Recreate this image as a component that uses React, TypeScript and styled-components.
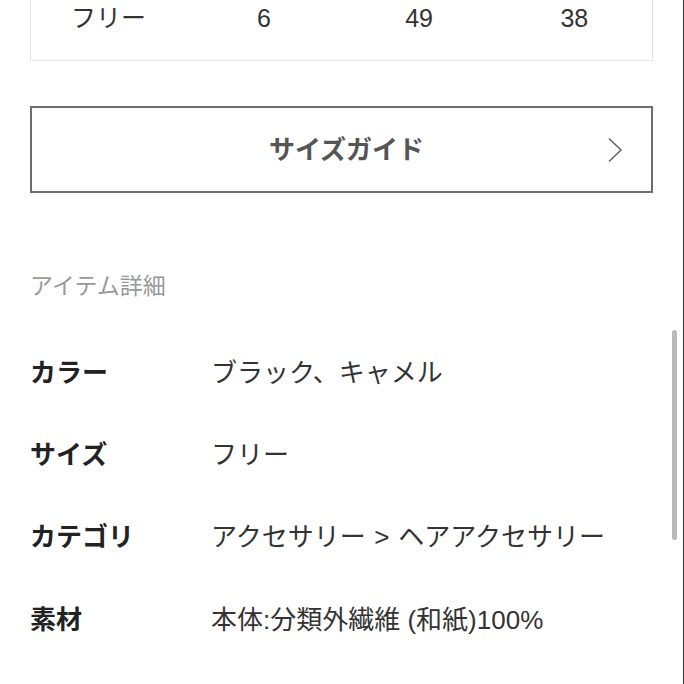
import React from 'react';
import styled, { createGlobalStyle } from 'styled-components';

const GlobalStyle = createGlobalStyle`
  html, body {
    margin: 0;
    padding: 0;
    background: #ffffff;
  }
  body {
    font-family: "Liberation Sans", "Noto Sans CJK JP", sans-serif;
    color: #222;
    overflow: hidden;
  }
`

const Page = styled.div`
  position: relative;
  box-sizing: border-box;
  width: 684px;
  height: 684px;
  overflow: hidden;
  padding: 0 30px;
  border-right: 1px solid #3a3a3a;
`

const SizeCard = styled.div`
  border: 1px solid #e4e4e4;
  border-top: none;
  padding-bottom: 24px;
`

const SizeRow = styled.div`
  display: grid;
  grid-template-columns: repeat(4, 1fr);
`

const SizeCell = styled.span`
  text-align: center;
  font-size: 25px;
  line-height: 36px;
  color: #333;
`

const GuideButton = styled.button`
  display: flex;
  align-items: center;
  justify-content: center;
  position: relative;
  box-sizing: border-box;
  width: 100%;
  height: 87px;
  margin-top: 45px;
  padding: 0 0 4px 10px;
  background: #fff;
  border: 2px solid #6e6e6e;
  font-family: inherit;
  font-size: 26px;
  font-weight: 700;
  color: #555;
`

const Chevron = styled.svg`
  position: absolute;
  right: 28px;
  top: 50%;
  transform: translateY(-50%);
`

const SectionTitle = styled.div`
  margin-top: 78px;
  font-size: 23px;
  line-height: 30px;
  color: #999;
`

const DetailList = styled.div`
  margin-top: 28px;
`

const DetailRow = styled.div`
  display: grid;
  grid-template-columns: 181px 1fr;
  align-items: center;
  height: 82.4px;
`

const DetailLabel = styled.span`
  font-size: 26px;
  font-weight: 700;
  color: #222;
`

const DetailValue = styled.span`
  font-size: 26px;
  color: #333;
  white-space: nowrap;
`

const ScrollThumb = styled.div`
  position: absolute;
  left: 672px;
  top: 330px;
  width: 5px;
  height: 210px;
  border-radius: 3px;
  background: #b9b9b9;
`

const sizes = ['フリー', '6', '49', '38']

const details = [
  { label: 'カラー', value: 'ブラック、キャメル' },
  { label: 'サイズ', value: 'フリー' },
  { label: 'カテゴリ', value: 'アクセサリー\u2004>\u2004ヘアアクセサリー' },
  { label: '素材', value: '本体:分類外繊維 (和紙)100%' },
  { label: '原産国', value: '日本' },
]

export default function App() {
  return (
    <>
      <GlobalStyle />
      <Page>
        <SizeCard>
          <SizeRow>
            {sizes.map((s, i) => <SizeCell key={i}>{s}</SizeCell>)}
          </SizeRow>
        </SizeCard>
        <GuideButton>
          サイズガイド
          <Chevron width="16" height="26" viewBox="0 0 16 26" fill="none">
            <path d="M2 1.5 L14 13 L2 24.5" stroke="#666" strokeWidth="1.6" />
          </Chevron>
        </GuideButton>
        <SectionTitle>アイテム詳細</SectionTitle>
        <DetailList>
          {details.map((d) => (
            <DetailRow key={d.label}>
              <DetailLabel>{d.label}</DetailLabel>
              <DetailValue>{d.value}</DetailValue>
            </DetailRow>
          ))}
        </DetailList>
        <ScrollThumb />
      </Page>
    </>
  )
}
